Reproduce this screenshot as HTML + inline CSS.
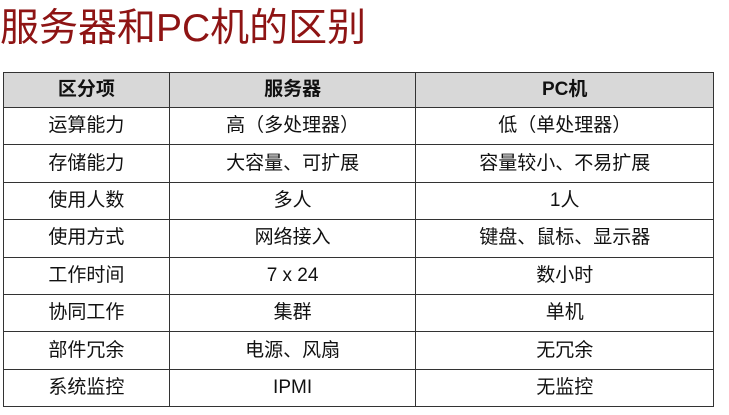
<!DOCTYPE html>
<html><head><meta charset="utf-8"><style>
body{margin:0;width:729px;height:415px;background:#fff;overflow:hidden;font-family:"Liberation Sans","Noto Sans CJK SC",sans-serif;}
h1{position:absolute;left:0;top:-3px;margin:0;font-size:39px;font-weight:normal;color:#8e1414;}
table{position:absolute;left:3px;top:72px;width:711px;border-collapse:collapse;font-size:19px;color:#111;}
td,th{border:1.5px solid #333;text-align:center;height:36.4px;padding:0;line-height:20px;}
th{background:#d8d8d8;font-weight:bold;height:34px;}
</style></head><body>
<h1>服务器和PC机的区别</h1>
<table>
<colgroup><col style="width:166px"><col style="width:247px"><col style="width:298px"></colgroup>
<tr><th>区分项</th><th>服务器</th><th>PC机</th></tr>
<tr><td>运算能力</td><td>高（多处理器）</td><td>低（单处理器）</td></tr>
<tr><td>存储能力</td><td>大容量、可扩展</td><td>容量较小、不易扩展</td></tr>
<tr><td>使用人数</td><td>多人</td><td>1人</td></tr>
<tr><td>使用方式</td><td>网络接入</td><td>键盘、鼠标、显示器</td></tr>
<tr><td>工作时间</td><td>7 x 24</td><td>数小时</td></tr>
<tr><td>协同工作</td><td>集群</td><td>单机</td></tr>
<tr><td>部件冗余</td><td>电源、风扇</td><td>无冗余</td></tr>
<tr><td>系统监控</td><td>IPMI</td><td>无监控</td></tr>
</table>
</body></html>
